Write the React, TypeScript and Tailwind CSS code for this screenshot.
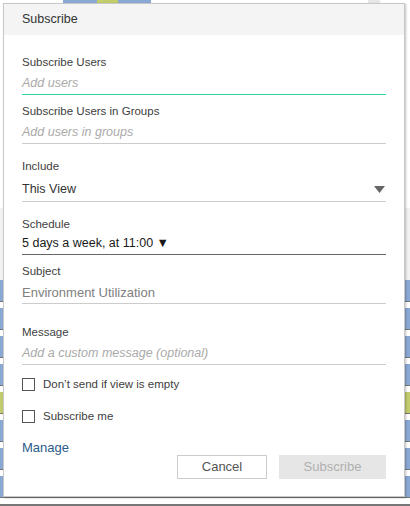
import React from "react";

const font = { fontFamily: '"Liberation Sans", Arial, sans-serif' };

function Field({
  label,
  children,
  line = "border-[#cccccc]",
  gap = "mt-[3px]",
  h = "h-[22px]",
}: {
  label: string;
  children: React.ReactNode;
  line?: string;
  gap?: string;
  h?: string;
}) {
  return (
    <div>
      <div className="h-4 leading-4 text-[11.5px] text-[#404040]">{label}</div>
      <div className={`${gap} ${h} flex items-center border-b ${line} text-[12.5px]`}>{children}</div>
    </div>
  );
}

function Checkbox({ label }: { label: string }) {
  return (
    <div className="flex items-center h-[13px]">
      <span className="w-[13px] h-[13px] border border-[#555] bg-white" />
      <span className="ml-[8px] text-[11.5px] text-[#404040]">{label}</span>
    </div>
  );
}

function Backdrop() {
  const rows = ["b", "b", "b", "b", "g", "b", "b", "b"];
  return (
    <div className="absolute inset-0 flex flex-col bg-white">
      <div className="relative h-[208px]">
        {/* bits of the dashboard above the dialog */}
        <div className="absolute left-[63px] top-0 w-[88px] h-[4px] flex">
          <div className="flex-1 bg-[#8aa8d4]" />
          <div className="w-[21px] bg-[#c3cc6b]" />
          <div className="flex-1 bg-[#8aa8d4]" />
        </div>
        <div className="absolute left-[368px] top-0 w-[12px] h-[4px] bg-[#e6e6e6]" />
      </div>
      <div className="h-[73px] bg-[#f2f2f2]" />
      {rows.map((r, i) => (
        <div key={i} className="h-[28px] flex flex-col">
          <div className={`h-[21px] ${r === "g" ? "bg-[#c2cc6c]" : "bg-[#8aa8d4]"}`} />
          <div className="h-px bg-[#777]" />
        </div>
      ))}
      <div className="h-[2px] bg-[#777]" />
    </div>
  );
}

export default function App() {
  return (
    <div className="relative w-[410px] h-[506px] overflow-hidden" style={font}>
      <Backdrop />

      <div className="absolute left-[3px] top-[3px] w-[402px] h-[494px] bg-white border border-[#c8c8c8] shadow-[1px_1px_2px_rgba(0,0,0,0.25)] flex flex-col">
        <div className="h-[31px] bg-[#f4f4f4] flex items-center px-[18px] text-[12.5px] text-[#333]">
          Subscribe
        </div>

        <div className="px-[18px] pt-[19px] flex flex-col">
          <Field label="Subscribe Users" line="border-[#2fd19e]">
            <span className="italic text-[#aaaaaa]">Add users</span>
          </Field>

          <div className="mt-[8px]">
            <Field label="Subscribe Users in Groups">
              <span className="italic text-[#aaaaaa]">Add users in groups</span>
            </Field>
          </div>

          <div className="mt-[14px]">
            <Field label="Include" gap="mt-[4px]" h="h-[24px]">
              <span className="flex-1 text-[#333]">This View</span>
              <svg width="11" height="7" viewBox="0 0 11 7" className="mr-[1px]">
                <path d="M0 0 H11 L5.5 7 Z" fill="#666" />
              </svg>
            </Field>
          </div>

          <div className="mt-[14px]">
            <Field label="Schedule" gap="mt-px" line="border-[#666666]">
              <span className="text-[#1a1a1a]">5 days a week, at 11:00 ▼</span>
            </Field>
          </div>

          <div className="mt-[8px]">
            <Field label="Subject">
              <span className="text-[13px] text-[#808080]">Environment Utilization</span>
            </Field>
          </div>

          <div className="mt-[20px]">
            <Field label="Message">
              <span className="italic text-[#aaaaaa]">Add a custom message (optional)</span>
            </Field>
          </div>

          <div className="mt-[13px] flex flex-col gap-[19px]">
            <Checkbox label="Don’t send if view is empty" />
            <Checkbox label="Subscribe me" />
          </div>

          <div className="mt-[17px] flex items-start justify-between">
            <a className="text-[13px] leading-4 text-[#2b5c8a] cursor-pointer">Manage</a>
            <div className="mt-[15px] flex gap-[12px]">
              <button className="w-[90px] h-[24px] border border-[#cccccc] bg-white text-[13px] text-[#555]">
                Cancel
              </button>
              <button className="w-[107px] h-[24px] bg-[#e6e6e6] text-[13px] text-[#b0b0b0]">
                Subscribe
              </button>
            </div>
          </div>
        </div>
      </div>
    </div>
  );
}
